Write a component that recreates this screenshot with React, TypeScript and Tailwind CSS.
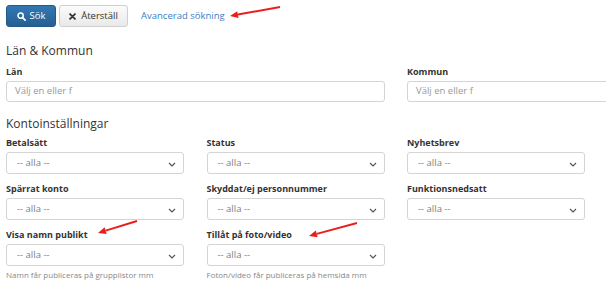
import React from "react";

const font = { fontFamily: '"Open Sans", "Liberation Sans", sans-serif' };

function Chevron() {
  return (
    <svg width="8" height="5" viewBox="0 0 8 5" className="absolute right-[7px] top-[9px]">
      <path d="M1 1 L4 4 L7 1" fill="none" stroke="#555" strokeWidth="1.2" />
    </svg>
  );
}

function Select({ label, help }: { label: string; help?: string }) {
  return (
    <div className="flex flex-col">
      <div className="h-[17px] flex items-center text-[9px] font-bold text-[#333]">{label}</div>
      <div className="relative mt-[1px] h-[22px] border border-[#d4d4d4] rounded-[3px] bg-white flex items-center pl-[10px] text-[9.5px] text-[#808080]">
        -- alla --
        <Chevron />
      </div>
      {help && <div className="mt-[3px] text-[8px] text-[#888]">{help}</div>}
    </div>
  );
}

function Arrow({ x1, y1, x2, y2 }: { x1: number; y1: number; x2: number; y2: number }) {
  const ang = Math.atan2(y2 - y1, x2 - x1);
  const len = 8;
  const w = 3.5;
  const bx = x2 - len * Math.cos(ang);
  const by = y2 - len * Math.sin(ang);
  const px = -Math.sin(ang) * w;
  const py = Math.cos(ang) * w;
  return (
    <g>
      <line x1={x1} y1={y1} x2={bx} y2={by} stroke="#e8201c" strokeWidth="2" />
      <polygon points={`${x2},${y2} ${bx + px},${by + py} ${bx - px},${by - py}`} fill="#e8201c" />
    </g>
  );
}

export default function App() {
  return (
    <div className="relative w-[606px] h-[283px] overflow-hidden bg-white" style={font}>
      <div className="w-[800px] pl-[6px]">
        <div className="flex items-center pt-[5px] h-[27px]">
          <button className="h-[22px] w-[50px] flex items-center justify-center gap-[4px] rounded-[3px] text-white text-[9.5px] border border-[#245a89] bg-gradient-to-b from-[#3278b3] to-[#265f92]">
            <svg width="9" height="9" viewBox="0 0 10 10">
              <circle cx="4" cy="4" r="2.9" fill="none" stroke="white" strokeWidth="1.7" />
              <path d="M6.2 6.2 L9 9" stroke="white" strokeWidth="1.9" strokeLinecap="round" />
            </svg>
            Sök
          </button>
          <button className="ml-[3px] h-[22px] w-[69px] flex items-center justify-center gap-[5px] rounded-[3px] text-[#333] text-[9.5px] border border-[#cfcfcf] bg-gradient-to-b from-[#fbfbfb] to-[#e9e9e9]">
            <svg width="7" height="7" viewBox="0 0 8 8">
              <path d="M1.2 1.2 L6.8 6.8 M6.8 1.2 L1.2 6.8" stroke="#333" strokeWidth="2" strokeLinecap="round" />
            </svg>
            Återställ
          </button>
          <a className="ml-[13px] text-[9.5px] text-[#3a80c2]">Avancerad sökning</a>
        </div>

        <div className="mt-[15px] text-[12px] text-[#333] leading-[18px]">Län &amp; Kommun</div>
        <div className="grid grid-cols-[379px_379px] gap-x-[22px] mt-[3px]">
          <div className="flex flex-col">
            <div className="h-[17px] flex items-center text-[9px] font-bold text-[#333]">Län</div>
            <div className="mt-[1px] h-[21px] border border-[#d4d4d4] rounded-[3px] flex items-center pl-[8px] text-[9.5px] text-[#999]">Välj en eller f</div>
          </div>
          <div className="flex flex-col">
            <div className="h-[17px] flex items-center text-[9px] font-bold text-[#333]">Kommun</div>
            <div className="mt-[1px] h-[21px] border border-[#d4d4d4] rounded-[3px] flex items-center pl-[8px] text-[9.5px] text-[#999]">Välj en eller f</div>
          </div>
        </div>

        <div className="mt-[13px] text-[12px] text-[#333] leading-[18px]">Kontoinställningar</div>
        <div className="grid grid-cols-[178px_178px_178px] gap-x-[22.5px] gap-y-[6px] mt-[1px]">
          <Select label="Betalsätt" />
          <Select label="Status" />
          <Select label="Nyhetsbrev" />
          <Select label="Spärrat konto" />
          <Select label="Skyddat/ej personnummer" />
          <Select label="Funktionsnedsatt" />
          <Select label="Visa namn publikt" help="Namn får publiceras på grupplistor mm" />
          <Select label="Tillåt på foto/video" help="Foton/video får publiceras på hemsida mm" />
        </div>
      </div>
      <svg className="absolute inset-0 pointer-events-none" width="606" height="283">
        <Arrow x1={280} y1={7} x2={230} y2={16} />
        <Arrow x1={137} y1={221} x2={98} y2={233} />
        <Arrow x1={357} y1={223} x2={309} y2={236} />
      </svg>
    </div>
  );
}
